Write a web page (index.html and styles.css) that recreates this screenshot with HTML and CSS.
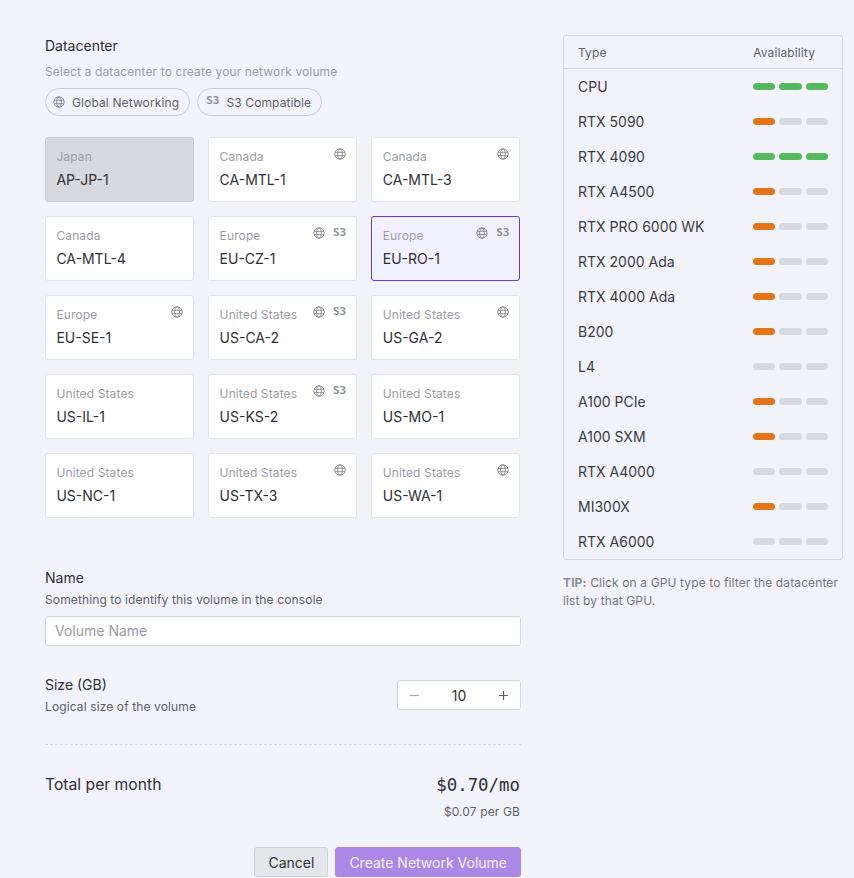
FILE: index.html
```html
<!DOCTYPE html>
<html lang="en">
<head>
    <meta charset="UTF-8">
    <meta name="viewport" content="width=device-width, initial-scale=1.0">
    <title>Create Network Volume</title>
    <link rel="stylesheet" href="styles.css">
</head>
<body>

<svg class="sprite" width="0" height="0">
    <symbol id="globe" viewBox="0 0 12 12">
        <g fill="none" stroke="currentColor" stroke-width="1">
            <circle cx="6" cy="6" r="5.2"/>
            <ellipse cx="6" cy="6" rx="2.3" ry="5.2"/>
            <path d="M1.1 4.3h9.8M1.1 7.7h9.8"/>
        </g>
    </symbol>
</svg>

<div class="page">
    <main class="form">
        <h2 class="title">Datacenter</h2>
        <p class="hint">Select a datacenter to create your network volume</p>
        <div class="chips">
            <span class="chip"><svg class="globe"><use href="#globe"/></svg>Global Networking</span>
            <span class="chip chip-s3"><span class="s3">S3</span>S3 Compatible</span>
        </div>

        <div class="dc-grid">
            <div class="dc dc-off">
                <div class="dc-region">Japan</div>
                <div class="dc-name">AP-JP-1</div>
            </div>
            <div class="dc">
                <div class="dc-tags"><svg class="globe"><use href="#globe"/></svg></div>
                <div class="dc-region">Canada</div>
                <div class="dc-name">CA-MTL-1</div>
            </div>
            <div class="dc">
                <div class="dc-tags"><svg class="globe"><use href="#globe"/></svg></div>
                <div class="dc-region">Canada</div>
                <div class="dc-name">CA-MTL-3</div>
            </div>
            <div class="dc">
                <div class="dc-region">Canada</div>
                <div class="dc-name">CA-MTL-4</div>
            </div>
            <div class="dc">
                <div class="dc-tags"><svg class="globe"><use href="#globe"/></svg><span class="s3">S3</span></div>
                <div class="dc-region">Europe</div>
                <div class="dc-name">EU-CZ-1</div>
            </div>
            <div class="dc dc-selected">
                <div class="dc-tags"><svg class="globe"><use href="#globe"/></svg><span class="s3">S3</span></div>
                <div class="dc-region">Europe</div>
                <div class="dc-name">EU-RO-1</div>
            </div>
            <div class="dc">
                <div class="dc-tags"><svg class="globe"><use href="#globe"/></svg></div>
                <div class="dc-region">Europe</div>
                <div class="dc-name">EU-SE-1</div>
            </div>
            <div class="dc">
                <div class="dc-tags"><svg class="globe"><use href="#globe"/></svg><span class="s3">S3</span></div>
                <div class="dc-region">United States</div>
                <div class="dc-name">US-CA-2</div>
            </div>
            <div class="dc">
                <div class="dc-tags"><svg class="globe"><use href="#globe"/></svg></div>
                <div class="dc-region">United States</div>
                <div class="dc-name">US-GA-2</div>
            </div>
            <div class="dc">
                <div class="dc-region">United States</div>
                <div class="dc-name">US-IL-1</div>
            </div>
            <div class="dc">
                <div class="dc-tags"><svg class="globe"><use href="#globe"/></svg><span class="s3">S3</span></div>
                <div class="dc-region">United States</div>
                <div class="dc-name">US-KS-2</div>
            </div>
            <div class="dc">
                <div class="dc-region">United States</div>
                <div class="dc-name">US-MO-1</div>
            </div>
            <div class="dc">
                <div class="dc-region">United States</div>
                <div class="dc-name">US-NC-1</div>
            </div>
            <div class="dc">
                <div class="dc-tags"><svg class="globe"><use href="#globe"/></svg></div>
                <div class="dc-region">United States</div>
                <div class="dc-name">US-TX-3</div>
            </div>
            <div class="dc">
                <div class="dc-tags"><svg class="globe"><use href="#globe"/></svg></div>
                <div class="dc-region">United States</div>
                <div class="dc-name">US-WA-1</div>
            </div>
        </div>

        <div class="name-field">
            <label class="title" for="volumeName">Name</label>
            <p class="sub">Something to identify this volume in the console</p>
            <input class="text-input" id="volumeName" type="text" placeholder="Volume Name">
        </div>

        <div class="size-row">
            <div>
                <div class="title">Size (GB)</div>
                <p class="sub">Logical size of the volume</p>
            </div>
            <div class="stepper">
                <svg class="step step-off" viewBox="0 0 12 12"><path d="M1 6h10"/></svg>
                <span>10</span>
                <svg class="step" viewBox="0 0 12 12"><path d="M1 6h10M6 1v10"/></svg>
            </div>
        </div>

        <div class="total-row">
            <div class="total-label">Total per month</div>
            <div class="total-price">
                <div class="price">$0.70/mo</div>
                <div class="per-gb">$0.07 per GB</div>
            </div>
        </div>

        <div class="actions">
            <button class="btn btn-cancel">Cancel</button>
            <button class="btn btn-create">Create Network Volume</button>
        </div>
    </main>

    <aside class="side">
        <div class="gpu-table">
            <div class="gpu-head"><span>Type</span><span>Availability</span></div>
            <div class="gpu-row"><span>CPU</span><span class="bars"><i class="green"></i><i class="green"></i><i class="green"></i></span></div>
            <div class="gpu-row"><span>RTX 5090</span><span class="bars"><i class="orange"></i><i></i><i></i></span></div>
            <div class="gpu-row"><span>RTX 4090</span><span class="bars"><i class="green"></i><i class="green"></i><i class="green"></i></span></div>
            <div class="gpu-row"><span>RTX A4500</span><span class="bars"><i class="orange"></i><i></i><i></i></span></div>
            <div class="gpu-row"><span>RTX PRO 6000 WK</span><span class="bars"><i class="orange"></i><i></i><i></i></span></div>
            <div class="gpu-row"><span>RTX 2000 Ada</span><span class="bars"><i class="orange"></i><i></i><i></i></span></div>
            <div class="gpu-row"><span>RTX 4000 Ada</span><span class="bars"><i class="orange"></i><i></i><i></i></span></div>
            <div class="gpu-row"><span>B200</span><span class="bars"><i class="orange"></i><i></i><i></i></span></div>
            <div class="gpu-row"><span>L4</span><span class="bars"><i></i><i></i><i></i></span></div>
            <div class="gpu-row"><span>A100 PCIe</span><span class="bars"><i class="orange"></i><i></i><i></i></span></div>
            <div class="gpu-row"><span>A100 SXM</span><span class="bars"><i class="orange"></i><i></i><i></i></span></div>
            <div class="gpu-row"><span>RTX A4000</span><span class="bars"><i></i><i></i><i></i></span></div>
            <div class="gpu-row"><span>MI300X</span><span class="bars"><i class="orange"></i><i></i><i></i></span></div>
            <div class="gpu-row"><span>RTX A6000</span><span class="bars"><i></i><i></i><i></i></span></div>
        </div>
        <p class="tip"><strong>TIP:</strong> Click on a GPU type to filter the datacenter list by that GPU.</p>
    </aside>
</div>

</body>
</html>
```

FILE: styles.css
```css
html, body {
    height: 100%;
}
body {
    font-family: Inter, "Liberation Sans", sans-serif;
    background-color: #f1f3f9;
    color: #2e2f35;
    margin: 0;
    overflow: hidden;
}
.sprite {
    position: absolute;
}
.page {
    display: flex;
    align-items: flex-start;
    padding: 35px 11px 0 45px;
    gap: 42px;
}
.form {
    width: 476px;
    flex: none;
    padding-top: 1px;
}
.side {
    width: 280px;
    flex: none;
}
.title {
    display: block;
    margin: 0;
    font-size: 14px;
    font-weight: 400;
    line-height: 20px;
    color: #2e2f35;
}
.hint {
    margin: 8px 0 0;
    font-size: 12px;
    line-height: 16px;
    letter-spacing: 0.12px;
    color: #9b9ca3;
}
.sub {
    margin: 4px 0 0;
    font-size: 12px;
    line-height: 16px;
    letter-spacing: 0.12px;
    color: #5f6068;
}
/* Chips */
.chips {
    display: flex;
    gap: 7px;
    margin-top: 8px;
}
.chip {
    display: flex;
    align-items: center;
    gap: 7px;
    height: 28px;
    box-sizing: border-box;
    padding: 0 10px 0 7px;
    border: 1px solid #c9cad0;
    border-radius: 14px;
    font-size: 12px;
    letter-spacing: 0.12px;
    color: #606168;
}
.chip-s3 {
    padding-left: 8px;
}
.chip .s3 {
    margin-bottom: 3px;
}
.globe {
    width: 12px;
    height: 12px;
    color: #8e8f96;
    flex: none;
}
.s3 {
    font-family: "DejaVu Sans Mono", monospace;
    font-size: 11px;
    font-weight: 700;
    line-height: 12px;
    letter-spacing: 0;
    color: #8e8f96;
}
/* Datacenter cards */
.dc-grid {
    display: grid;
    grid-template-columns: repeat(3, 149px);
    grid-auto-rows: 65px;
    gap: 14px 14.2px;
    margin-top: 21px;
}
.dc {
    position: relative;
    box-sizing: border-box;
    padding: 11px 10px 11px 10.4px;
    background-color: #fff;
    border: 1px solid #e3e4e9;
    border-radius: 3px;
}
.dc-off {
    background-color: #d8d9de;
    border-color: #c9cad0;
}
.dc-selected {
    background-color: #f1f0ff;
    border-color: #6b35e0;
}
.dc-region {
    font-size: 12px;
    line-height: 16px;
    letter-spacing: 0.12px;
    color: #9b9ca3;
}
.dc-name {
    margin-top: 5px;
    font-size: 14px;
    line-height: 20px;
    color: #2e2f35;
}
.dc-tags {
    position: absolute;
    top: 10px;
    right: 10px;
    display: flex;
    align-items: center;
    gap: 8px;
}
/* Name and size */
.name-field {
    margin-top: 50px;
}
.text-input {
    display: block;
    box-sizing: border-box;
    width: 100%;
    height: 30px;
    margin-top: 8px;
    padding: 0 9px 2px;
    background-color: #fff;
    border: 1px solid #d5d6dc;
    border-radius: 3px;
    font-family: inherit;
    font-size: 14px;
    color: #2e2f35;
}
.text-input::placeholder {
    color: #9b9ca3;
}
.size-row {
    display: flex;
    justify-content: space-between;
    align-items: center;
    margin-top: 29px;
    padding-bottom: 29px;
    border-bottom: 1px dashed #d5d6dc;
}
.stepper {
    display: flex;
    align-items: center;
    justify-content: space-between;
    box-sizing: border-box;
    width: 124px;
    height: 30px;
    padding: 0 11px;
    background-color: #fff;
    border: 1px solid #d5d6dc;
    border-radius: 3px;
    font-size: 14px;
}
.step {
    width: 11px;
    height: 11px;
    fill: none;
    stroke: #5f6068;
    stroke-width: 1.3;
}
.step-off {
    stroke: #a8a9af;
}
/* Total */
.total-row {
    display: flex;
    justify-content: space-between;
    align-items: flex-start;
    margin-top: 30px;
    padding-right: 1px;
}
.total-label {
    font-size: 15.7px;
    line-height: 20px;
}
.total-price {
    text-align: right;
}
.price {
    font-family: "DejaVu Sans Mono", "Liberation Mono", monospace;
    font-size: 17.4px;
    line-height: 20px;
}
.per-gb {
    margin-top: 9px;
    font-size: 12px;
    line-height: 16px;
    letter-spacing: 0.12px;
    color: #5f6068;
}
.actions {
    display: flex;
    justify-content: flex-end;
    gap: 7px;
    margin-top: 27px;
}
.btn {
    height: 30px;
    padding: 0 13px;
    border-radius: 3px;
    font-family: inherit;
    font-size: 14px;
    cursor: pointer;
}
.btn-cancel {
    background-color: #e5e6ea;
    border: 1px solid #cfd0d6;
    color: #2e2f35;
}
.btn-create {
    background-color: #ab88e6;
    border: 1px solid #ab88e6;
    color: #f5f0ff;
}
/* GPU table */
.gpu-table {
    border: 1px solid #d5d6dc;
    border-radius: 3px;
}
.gpu-head {
    display: flex;
    justify-content: space-between;
    align-items: center;
    height: 32px;
    padding: 0 27px 0 14px;
    border-bottom: 1px solid #d5d6dc;
    font-size: 12px;
    letter-spacing: 0.12px;
    color: #606168;
}
.gpu-row {
    display: flex;
    justify-content: space-between;
    align-items: center;
    height: 35px;
    padding: 0 14px;
    font-size: 14px;
    color: #3a3b41;
}
.bars {
    display: flex;
    gap: 4px;
}
.bars i {
    display: block;
    width: 22.3px;
    height: 7px;
    border-radius: 4px;
    background-color: #d8d9de;
}
.bars .green {
    background-color: #55b95f;
}
.bars .orange {
    background-color: #e57419;
}
.tip {
    margin: 14px 0 0;
    font-size: 12px;
    line-height: 18px;
    letter-spacing: 0.12px;
    color: #75767d;
}
.tip strong {
    font-weight: 700;
    color: #8e8f96;
}
```
